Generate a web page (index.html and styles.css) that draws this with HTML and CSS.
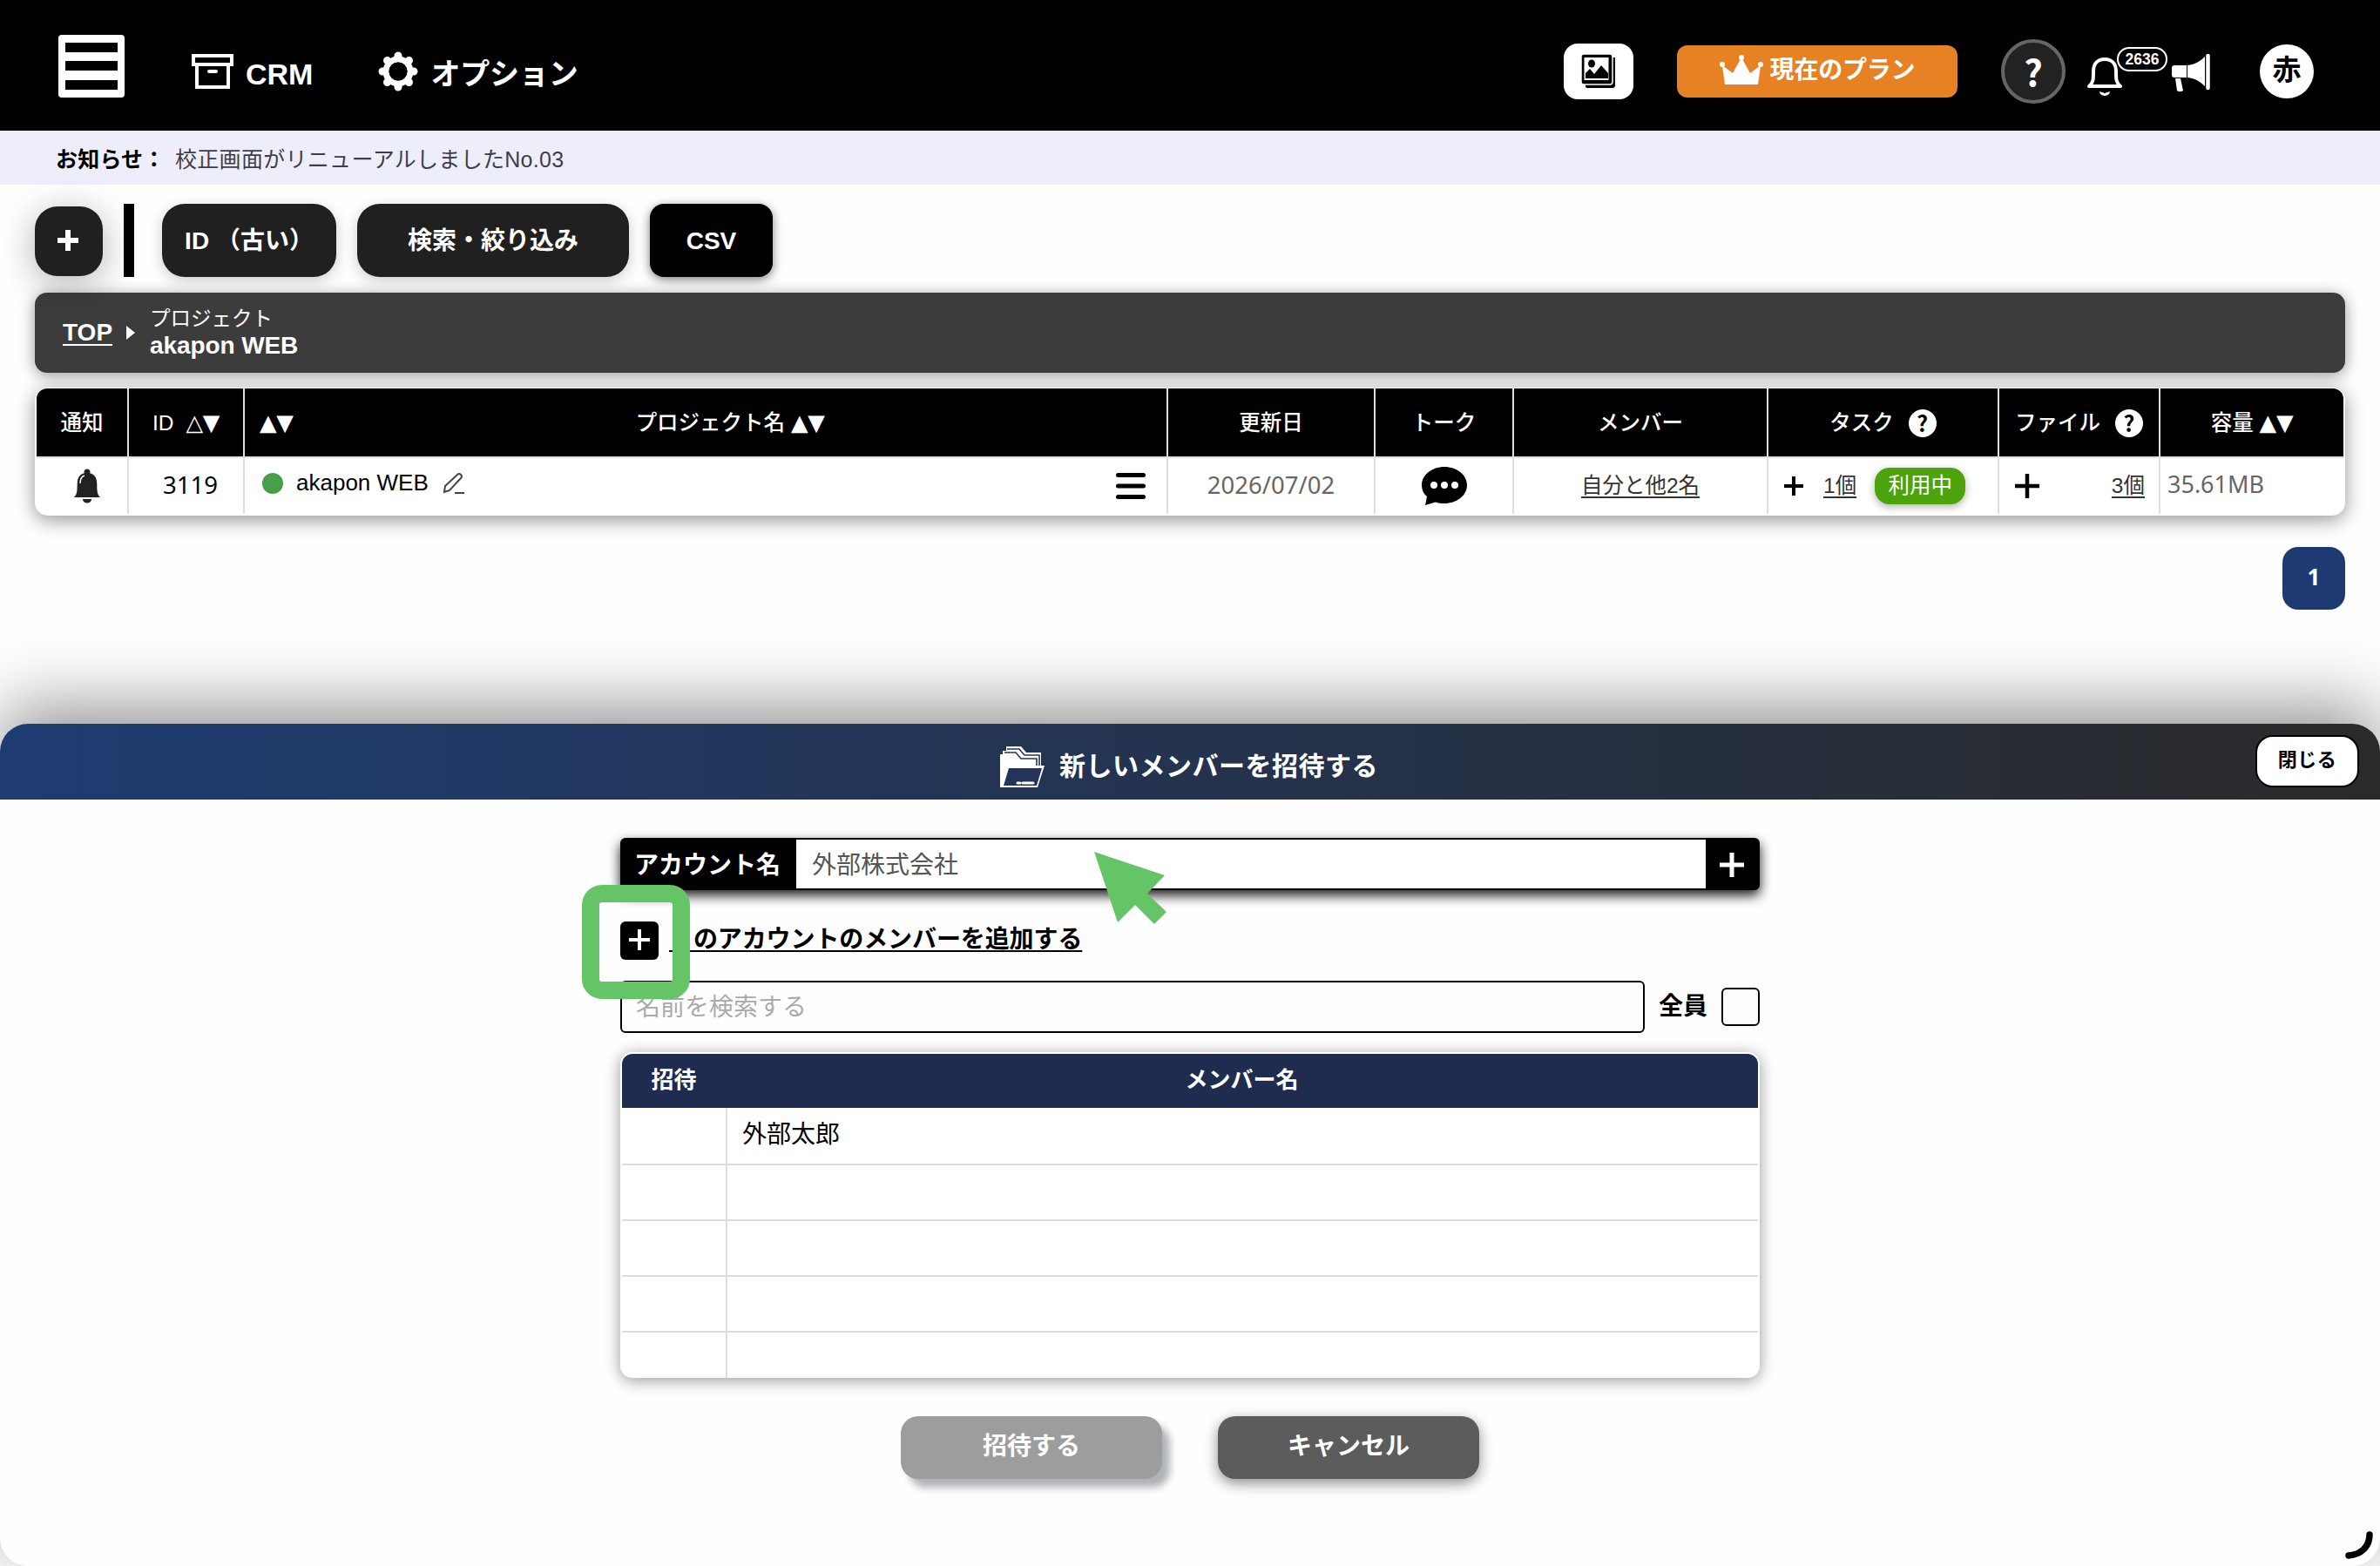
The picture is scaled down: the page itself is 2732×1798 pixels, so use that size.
FILE: index.html
```html
<!DOCTYPE html>
<html lang="ja">
<head>
	<meta charset="utf-8">
	<title>akapon WEB</title>
	<link rel="stylesheet" href="styles.css">
</head>
<body>
	<header class="header">
		<svg class="menu" width="76" height="72" viewBox="0 0 76 72"><rect width="76" height="72" rx="4" fill="#fff"/><path d="M8 9h60v11H8zM8 30h60v11H8zM8 52h60v11H8z" fill="#000"/></svg>
		<a class="nav crm">
			<svg width="48" height="40" viewBox="0 0 48 40" fill="none" stroke="#fff" stroke-width="4"><path d="M2 2h44v10H2zM6 12v26h36V12"/><path d="M20 20h8" stroke-linecap="round"/></svg>
			<span>CRM</span>
		</a>
		<a class="nav option">
			<svg width="46" height="46" viewBox="0 0 46 46"><circle cx="23" cy="23" r="14" fill="none" stroke="#fff" stroke-width="7"/><g stroke="#fff" stroke-width="9" stroke-linecap="round"><path d="M23 7V5M23 39v2M7 23H5M39 23h2M11.5 11.5l-1-1M34.500 34.500l1 1M34.500 11.500l1-1M11.500 34.500l-1 1"/></g><circle cx="23" cy="23" r="10.500" fill="#000"/></svg>
			<span>オプション</span>
		</a>
		<div class="tools">
			<a class="gallery"><svg width="40" height="40" viewBox="0 0 40 40"><path d="M4 4h35v32a3 3 0 0 1-3 3H7a2 2 0 0 1-2-2z" fill="#000"/><rect width="36" height="35" rx="3" fill="#000" stroke="#fff" stroke-width="1.500"/><rect x="3.500" y="4" width="28" height="26" fill="#fff"/><path d="M5 28V22l5-5 5 6 8-10 8 9v6z" fill="#000"/><ellipse cx="12" cy="11" rx="4" ry="4.500" fill="#000"/></svg></a>
			<a class="plan"><svg width="50" height="34" viewBox="0 0 50 34" fill="#fff"><path d="M6 34L3 12l12 9L25 3l10 18 12-9-3 22z"/><circle cx="3" cy="11" r="3"/><circle cx="47" cy="11" r="3"/><circle cx="25" cy="3" r="3"/></svg><span>現在のプラン</span></a>
			<a class="help">?</a>
			<a class="bell">
				<svg width="40" height="44" viewBox="0 0 40 44" fill="none" stroke="#fff" stroke-width="4"><path d="M2 33c5-4 5-8 5-17C7 7 12 2 20 2s13 5 13 14c0 9 0 13 5 17z" stroke-linejoin="round"/><path d="M14 39a6 5 0 0 0 12 0l-6 2z" fill="#fff" stroke="none"/></svg>
				<span class="count">2636</span>
			</a>
			<svg class="horn" width="44" height="44" viewBox="0 0 44 44"><path d="M3 13h14v14H3a3 3 0 0 1-3-3v-8a3 3 0 0 1 3-3zM18 13C27 12 33 8 38 3v34c-5-5-11-9-20-10z" fill="#fff"/><path d="M4 28h6l3 14c-3 2-6 1-7 0z" fill="#fff"/><path d="M41.500 2v37" stroke="#fff" stroke-width="4.500" stroke-linecap="round"/></svg>
			<a class="avatar">赤</a>
		</div>
	</header>

	<div class="news"><b>お知らせ：</b><span>校正画面がリニューアルしましたNo.03</span></div>

	<div class="toolbar">
		<a class="btn add"><svg width="24" height="24" viewBox="0 0 24 24"><path d="M12 0v24M0 12h24" stroke="#fff" stroke-width="6"/></svg></a>
		<i class="bar"></i>
		<a class="btn sort">ID （古い）</a>
		<a class="btn search">検索・絞り込み</a>
		<a class="btn csv">CSV</a>
	</div>

	<div class="crumb">
		<a class="top">TOP</a>
		<i class="arrow"></i>
		<div class="place"><span>プロジェクト</span><b>akapon WEB</b></div>
	</div>

	<div class="list">
		<div class="row head">
			<div>通知</div>
			<div class="id">ID<em>△▼</em></div>
			<div class="name"><em>▲▼</em><span>プロジェクト名 <em>▲▼</em></span></div>
			<div>更新日</div>
			<div>トーク</div>
			<div>メンバー</div>
			<div>タスク<i class="q">?</i></div>
			<div>ファイル<i class="q">?</i></div>
			<div>容量 <em>▲▼</em></div>
		</div>
		<div class="row item">
			<div class="notice"><svg width="30" height="40" viewBox="0 0 30 40" fill="#222"><circle cx="15" cy="4" r="3.500"/><path d="M0 33c5-4 3-13 4-19C5 8 9 5 15 5s10 3 11 9c1 6-1 15 4 19z"/><path d="M10 35h10c0 6-10 6-10 0z"/><path d="M7 17c0-5 2-8 5-9" fill="none" stroke="#fff" stroke-width="1.500"/></svg></div>
			<div class="num">3119</div>
			<div class="title"><i class="dot"></i><span>akapon WEB</span>
				<svg width="26" height="26" viewBox="0 0 26 26" fill="none" stroke="#444" stroke-width="2"><path d="M2 23l1-7L17 3q2-2 4 0t0 4L8 21zM14 24h11"/></svg>
				<svg class="burger" width="34" height="30" viewBox="0 0 34 30" stroke="#000" stroke-width="5" stroke-linecap="round"><path d="M2.500 2.500h29M2.500 15h29M2.500 27.500h29"/></svg>
			</div>
			<div class="num gray">2026/07/02</div>
			<div><svg width="52" height="46" viewBox="0 0 52 46"><path d="M26 1c14 0 26 9 26 21S40 43 26 43c-4 0-7-.500-10-1.500L4 45l2-10C2 32 0 27 0 22 0 10 12 1 26 1z" fill="#000"/><g fill="#fff"><circle cx="14" cy="22" r="4"/><circle cx="26" cy="22" r="4"/><circle cx="38" cy="22" r="4"/></g></svg></div>
			<div><u>自分と他2名</u></div>
			<div class="task"><svg width="22" height="22" viewBox="0 0 22 22"><path d="M11 0v22M0 11h22" stroke="#000" stroke-width="4"/></svg><u>1個</u><span class="using">利用中</span></div>
			<div class="file"><svg width="28" height="28" viewBox="0 0 28 28"><path d="M14 0v28M0 14h28" stroke="#000" stroke-width="4.500"/></svg><u>3個</u></div>
			<div class="num gray size">35.61MB</div>
		</div>
	</div>

	<div class="pager"><a>1</a></div>

	<div class="modal">
		<div class="modal-head">
			<svg width="51" height="48" viewBox="0 0 51 48"><path d="M0 47V9h3V5h4V0h17l6 7h17v15h4l-8 25z" fill="#fff"/><path d="M8 3h14l6 7h17v12M5 7h13l6 7h18v8" fill="none" stroke="#25345a" stroke-width="1.600"/><path d="M10 25h38l-6 20H4z" fill="#24335a"/><path d="M20 42h3M26 42h12" stroke="#fff" stroke-width="3" stroke-linecap="round"/></svg>
			<span>新しいメンバーを招待する</span>
			<a class="close">閉じる</a>
		</div>
		<div class="form">
			<div class="account">
				<label>アカウント名</label>
				<div class="value">外部株式会社</div>
				<a class="plus"><svg width="28" height="28" viewBox="0 0 28 28"><path d="M14 0v28M0 14h28" stroke="#fff" stroke-width="5"/></svg></a>
			</div>
			<div class="addline">
				<a class="plus"><svg width="24" height="24" viewBox="0 0 24 24"><path d="M12 0v24M0 12h24" stroke="#fff" stroke-width="4"/></svg></a>
				<u>このアカウントのメンバーを追加する</u>
			</div>
			<div class="find">
				<div class="box">名前を検索する</div>
				<b>全員</b>
				<i class="check"></i>
			</div>
			<div class="members">
				<div class="mrow mhead"><div>招待</div><div>メンバー名</div></div>
				<div class="mrow"><div></div><div>外部太郎</div></div>
				<div class="mrow"><div></div><div></div></div>
				<div class="mrow"><div></div><div></div></div>
				<div class="mrow"><div></div><div></div></div>
				<div class="mrow last"><div></div><div></div></div>
			</div>
			<div class="actions">
				<a class="invite">招待する</a>
				<a class="cancel">キャンセル</a>
			</div>
		</div>
		<svg class="grip" width="32" height="32" viewBox="0 0 32 32"><path d="M28 4C28 18 18 27 4 28" fill="none" stroke="#000" stroke-width="7.500" stroke-linecap="round"/></svg>
	</div>

	<!-- guide marks -->
	<div class="mark"></div>
	<svg class="pointer" width="84" height="84" viewBox="0 0 84 84"><path d="M0 0l81 27-20 21 22 21-14 14-22-22-20 20z" fill="#65c566"/></svg>
</body>
</html>
```
FILE: styles.css
```css
* {margin: 0; padding: 0; box-sizing: border-box;}
body {position: relative; width: 2732px; height: 1798px; overflow: hidden; background: #fefefe; color: #000; font-family: "Liberation Sans", "Noto Sans CJK JP", sans-serif; font-size: 28px; line-height: 1.2;}
svg {display: block; flex: none;}
i, em {font-style: normal;}

.header {display: flex; align-items: flex-start; height: 150px; padding: 40px 76px 0 67px; background: #000; color: #fff;}
.nav {display: flex; align-items: center; height: 46px; margin-top: 19px; font-size: 34px; font-weight: bold; white-space: nowrap;}
.crm {margin-left: 77px;}
.crm span {margin-left: 14px; padding-top: 6px;}
.option {margin-left: 75px;}
.option span {margin-left: 14px; padding-top: 7px; font-weight: 600; letter-spacing: -0.2px;}
.tools {display: flex; margin-left: auto;}
.gallery {display: flex; align-items: center; justify-content: center; width: 80px; height: 64px; margin-top: 10px; border-radius: 16px; background: #fff;}
.plan {display: flex; align-items: center; justify-content: center; width: 322px; height: 60px; margin: 12px 0 0 50px; padding-bottom: 5px; border-radius: 12px; background: #e68124; font-weight: 600; letter-spacing: -0.2px;}
.plan svg {margin-right: 8px;}
.plan span {padding-top: 2px;}
.help {display: flex; align-items: center; justify-content: center; width: 74px; height: 74px; margin: 5px 0 0 50px; padding-bottom: 2px; border: 4px solid #666; border-radius: 50%; background: #222; font: bold 42px/50px "Noto Sans CJK JP", sans-serif;}
.bell {position: relative; width: 40px; margin: 26px 0 0 25px;}
.count {position: absolute; left: 34px; top: -12px; width: 58px; height: 28px; border: 2px solid #fff; border-radius: 14px; background: #000; font-size: 17.5px; font-weight: bold; line-height: 24px; text-align: center;}
.horn {margin: 22px 0 0 57px;}
.avatar {display: flex; align-items: center; justify-content: center; width: 62px; height: 62px; margin: 11px 0 0 57px; padding-bottom: 2px; border-radius: 50%; background: #fff; color: #000; font-size: 33px; font-weight: 600;}

.news {display: flex; align-items: center; height: 62px; padding: 3px 0 0 64px; background: #eeeefa; font-size: 25px; letter-spacing: 0.3px;}
.news b {width: 137px; font-weight: 600; letter-spacing: 0.2px;}
.news span {color: #3e3e48; white-space: nowrap;}

.toolbar {display: flex; align-items: center; height: 84px; margin: 22px 0 0 40px; color: #fff; font-weight: bold;}
.btn {display: flex; align-items: center; justify-content: center; height: 84px; padding-top: 2px; border-radius: 26px; background: #202020; box-shadow: 0 4px 16px rgba(0,0,0,.2); white-space: pre;}
.add {width: 78px; height: 80px; margin-top: 2px; padding: 0 2px 2px 0; box-shadow: 0 8px 40px rgba(0,0,0,.3);}
.bar {width: 12px; height: 84px; margin: 0 32px 0 24px; background: #000;}
.sort {width: 200px;}
.search {width: 312px; margin: 0 24px;}
.csv {width: 141px; border-radius: 16px; background: #000; box-shadow: 0 3px 12px rgba(0,0,0,.5);}

.crumb {display: flex; align-items: center; width: 2652px; height: 92px; margin: 18px 0 0 40px; padding-left: 32px; border-radius: 14px; background: #3c3c3c; color: #fff; box-shadow: 0 3px 18px rgba(0,0,0,.4);}
.top {font-weight: bold; text-decoration: underline; text-decoration-thickness: 2px; text-underline-offset: 4px;}
.arrow {margin: 0 17px 0 16px; border: 8px solid transparent; border-left: 10px solid #fff; border-right: 0;}
.place {display: flex; flex-direction: column;}
.place span {font-size: 23.500px; line-height: 29px;}
.place b {line-height: 32px; letter-spacing: -0.1px;}

.list {width: 2652px; height: 147px; margin: 17px 0 0 40px; padding: 1px 2px 2px; border-radius: 15px; background: #fff; box-shadow: 0 5px 22px rgba(0,0,0,.42); overflow: hidden;}
.row {display: grid; grid-template-columns: 106px 133px 1060px 238px 159px 292px 265px 185px 210px;}
.row > div {display: flex; align-items: center; justify-content: center; border-right: 2px solid #dde0e3; white-space: pre;}
.row > div:last-child {border-right: 0;}
.head {height: 78px; background: #000; color: #fff; font-size: 24.500px; font-weight: 500; border-radius: 12px 12px 0 0;}
.head > div {padding-top: 1px;}
.head em {font-family: "DejaVu Sans", sans-serif; font-size: 25.500px; letter-spacing: -0.3px;}
.head .id em {margin-left: 14px;}
.head .name {justify-content: flex-start; padding-left: 17px;}
.name span {margin-left: 393px;}
.q {display: inline-block; width: 32px; height: 32px; margin-left: 17px; border-radius: 50%; background: #fff; color: #000; font: bold 25px/30px "Noto Sans CJK JP", sans-serif; text-align: center;}
.item {height: 66px; border-top: 2px solid #dde0e3; font-size: 24.500px;}
.row .notice {padding: 0 0 0 11px;}
.row .num {padding: 0 0 4px 10px; font-family: "Noto Sans", sans-serif; font-size: 27.500px;}
.row .gray {padding-left: 0; color: #666;}
.row .size {justify-content: flex-start; padding-left: 8px; font-size: 27px;}
.row .title {justify-content: flex-start; padding: 0 24px 7px 20px; font-size: 26px;}
.dot {width: 24px; height: 24px; margin-right: 15px; border-radius: 50%; background: #46a049;}
.title svg {margin-left: 16px;}
.title .burger {margin: 7px 0 0 auto;}
u {text-decoration-thickness: 2px; text-underline-offset: 4px; color: #333;}
.row .task {justify-content: flex-start; padding-left: 18px;}
.task u {margin-left: 23px;}
.using {width: 104px; height: 42px; margin-left: 21px; border-radius: 17px; background: #4ca30c; box-shadow: 0 3px 10px rgba(0,0,0,.3); color: #fff; line-height: 41px; text-align: center;}
.row .file {justify-content: space-between; padding: 0 16px 0 18px;}

.pager {display: flex; justify-content: flex-end; margin: 36px 40px 0 0;}
.pager a {width: 72px; height: 72px; border-radius: 18px; background: #1d3b70; color: #fff; font: bold 26px/69px "Noto Sans", sans-serif; text-align: center;}

.modal {position: absolute; left: 0; top: 831px; width: 2732px; height: 967px; border-radius: 32px; background: #fefefe; box-shadow: 0 -20px 80px rgba(0,0,0,.42);}
.modal-head {display: flex; align-items: center; height: 87px; padding: 0 24px 0 1148px; border-radius: 32px 32px 0 0; background: linear-gradient(90deg, #1e3c72, #2a2a2a); color: #fff; font-size: 30px; font-weight: 600; letter-spacing: 0.5px;}
.modal-head svg {margin: 13px 17px 0 0;}
.modal-head span {padding-top: 10px;}
.close {width: 119px; height: 60px; margin-left: auto; margin-bottom: 1px; border: 2px solid #000; border-radius: 20px; background: #fff; color: #000; font-size: 22px; font-weight: 600; line-height: 54px; text-align: center;}
.form {width: 1308px; margin: 44px 0 0 712px;}
.account {display: flex; height: 60px; border: 2px solid #000; border-radius: 6px; background: #000; box-shadow: 0 6px 14px rgba(0,0,0,.9);}
.account label {width: 200px; padding-left: 14px; color: #fff; font-weight: 600; line-height: 59px;}
.value {flex: 1; padding-left: 18px; background: #fff; color: #555; line-height: 59px;}
.account .plus {width: 60px; padding: 15px 0 0 16px;}
.addline {display: flex; align-items: center; height: 44px; margin-top: 36px;}
.addline .plus {width: 44px; height: 44px; padding: 9px 10px; border-radius: 6px; background: #000;}
.addline u {margin: 0 0 2px 12px; color: #000; font-weight: 600; text-underline-offset: 3px; letter-spacing: -0.1px;}
.find {display: flex; align-items: center; height: 60px; margin-top: 24px;}
.box {width: 1176px; height: 60px; padding-left: 16px; border: 2px solid #000; border-radius: 6px; color: #aaa; line-height: 57px;}
.find b {margin-left: 16px; font-weight: 600;}
.check {width: 44px; height: 44px; margin-left: auto; border: 2px solid #000; border-radius: 6px;}
.members {height: 374px; margin-top: 22px; padding: 2px; border-radius: 14px; background: #fff; box-shadow: 0 3px 18px rgba(0,0,0,.4); overflow: hidden;}
.mrow {display: grid; grid-template-columns: 119px 1fr; height: 64px; border-bottom: 2px solid #ddd;}
.mrow > div {padding-left: 17px; border-left: 2px solid #ddd; line-height: 62px;}
.mrow > div:first-child {padding: 0; border: 0;}
.mrow:nth-child(2) {height: 66px;}
.mrow.last {height: 52px; border: 0;}
.mrow.mhead {height: 62px; border: 0; border-radius: 12px 12px 0 0; background: #1f2c50; color: #fff; font-size: 26px; font-weight: 600;}
.mrow.mhead > div {padding: 0; border: 0; text-align: center; line-height: 60px;}
.actions {display: flex; justify-content: center; gap: 64px; margin-top: 44px; color: #fff; font-weight: 600; text-align: center; line-height: 70px;}
.actions a {width: 300px; height: 72px; border-radius: 20px;}
.invite {background: #9d9d9d; box-shadow: 9px 10px 9px #b0b3b6;}
.cancel {background: #5c5c5c; box-shadow: 0 5px 16px rgba(0,0,0,.45);}
.grip {position: absolute; right: 8px; bottom: 8px;}

.mark {position: absolute; left: 668px; top: 1016px; width: 124px; height: 131px; border: 20px solid #65c566; border-radius: 23px;}
.pointer {position: absolute; left: 1256px; top: 978px;}
```
